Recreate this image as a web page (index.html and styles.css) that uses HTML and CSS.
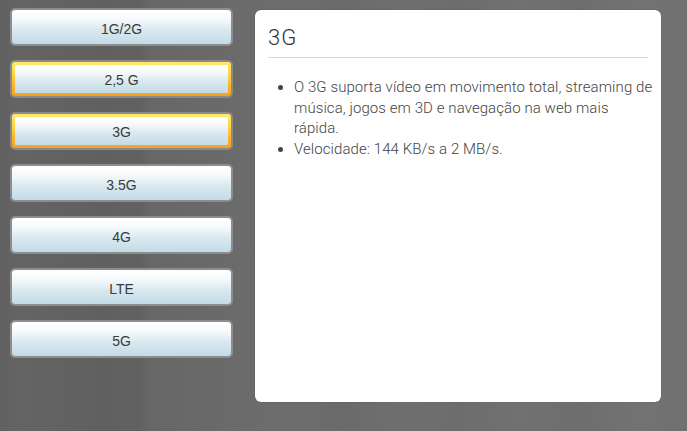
FILE: index.html
```html
<!DOCTYPE html>
<html lang="pt">
<head>
<meta charset="utf-8">
<title>3G</title>
<link rel="stylesheet" href="styles.css">
</head>
<body>
<div class="stage">
  <nav class="tabs">
    <div class="btn"><div class="face">1G/2G</div></div>
    <div class="btn active"><div class="face">2,5 G</div></div>
    <div class="btn active"><div class="face">3G</div></div>
    <div class="btn"><div class="face">3.5G</div></div>
    <div class="btn"><div class="face">4G</div></div>
    <div class="btn"><div class="face">LTE</div></div>
    <div class="btn"><div class="face">5G</div></div>
  </nav>
  <section class="panel">
    <h1 class="title">3G</h1>
    <ul class="list">
      <li>O 3G suporta vídeo em movimento total, streaming de música, jogos em 3D e navegação na web mais rápida.</li>
      <li>Velocidade: 144 KB/s a 2 MB/s.</li>
    </ul>
  </section>
</div>
</body>
</html>
```
FILE: styles.css
```css
html, body {
  margin: 0;
  padding: 0;
  width: 687px;
  height: 431px;
  overflow: hidden;
}
body {
  background-color: #686868;
  background-image:
    linear-gradient(90deg,
      #616161 0px, #646464 20px, #626262 60px, #606060 100px, #616161 140px,
      #676767 150px, #696969 200px, #6b6b6b 240px, #6d6d6d 300px,
      #6a6a6a 340px, #6f6f6f 400px, #6d6d6d 460px, #717171 520px,
      #6e6e6e 580px, #737373 640px, #707070 687px);
  font-family: "Liberation Sans", Arial, sans-serif;
}
.stage {
  display: flex;
  align-items: flex-start;
  padding: 8px 0 0 10px;
  gap: 22px;
}
.tabs {
  display: flex;
  flex-direction: column;
  gap: 14px;
  width: 223px;
}
.btn {
  height: 38px;
  box-sizing: border-box;
  border: 2px solid #8d8d8d;
  border-radius: 5px;
  display: flex;
}
.face {
  flex: 1;
  border-radius: 3px;
  background: linear-gradient(180deg, #ffffff 0%, #f7fafc 25%, #d9e8ef 60%, #c2dbe7 100%);
  display: flex;
  align-items: center;
  justify-content: center;
  padding-top: 3px;
  box-sizing: border-box;
  font-size: 14px;
  color: #3a3a3a;
}
.btn.active {
  padding: 3px;
  background: linear-gradient(180deg, #ffea6e 0%, #fdd546 35%, #fbb02a 75%, #f9a01c 100%);
  border-color: #8a8a8a;
}
.btn.active .face {
  border-radius: 1px;
  padding-top: 1px;
}
.panel {
  margin-top: 2px;
  width: 406px;
  height: 392px;
  box-sizing: border-box;
  background: #fff;
  border-radius: 6px;
  padding: 12px 13px 0 13px;
  box-shadow: 0 0 1px rgba(0,0,0,0.4);
}
.title {
  margin: 0;
  font-family: Roboto, "Liberation Sans", sans-serif;
  font-weight: 300;
  font-size: 22px;
  letter-spacing: 1px;
  line-height: 31px;
  color: #333;
  padding-bottom: 4px;
  border-bottom: 1px solid #d6d6d6;
}
.list {
  margin: 19px -6px 0 0;
  padding: 0 0 0 26px;
  font-family: Roboto, "Liberation Sans", sans-serif;
  font-weight: 300;
  font-size: 15px;
  letter-spacing: 0.08px;
  line-height: 20.5px;
  color: #444;
}
```
